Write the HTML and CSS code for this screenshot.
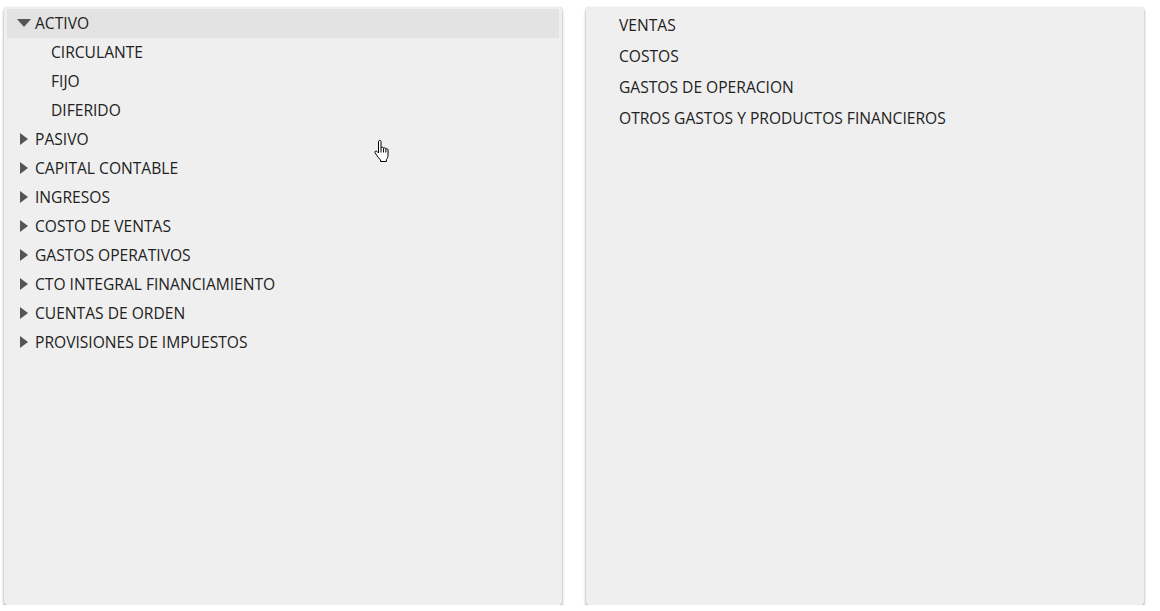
FILE: index.html
```html
<!DOCTYPE html>
<html lang="es">

<head>
    <meta charset="UTF-8">
    <title>Catalogo de cuentas</title>
    <link rel="stylesheet" href="styles.css">
</head>

<body>

    <div class="layout">
        <!-- Arbol de cuentas -->
        <div class="panel tree-panel">
            <ul class="tree">
                <li class="node open">
                    <div class="row selected"><span class="caret down"></span>ACTIVO</div>
                    <ul class="children">
                        <li><div class="row child">CIRCULANTE</div></li>
                        <li><div class="row child">FIJO</div></li>
                        <li><div class="row child">DIFERIDO</div></li>
                    </ul>
                </li>
                <li class="node"><div class="row"><span class="caret"></span>PASIVO</div></li>
                <li class="node"><div class="row"><span class="caret"></span>CAPITAL CONTABLE</div></li>
                <li class="node"><div class="row"><span class="caret"></span>INGRESOS</div></li>
                <li class="node"><div class="row"><span class="caret"></span>COSTO DE VENTAS</div></li>
                <li class="node"><div class="row"><span class="caret"></span>GASTOS OPERATIVOS</div></li>
                <li class="node"><div class="row"><span class="caret"></span>CTO INTEGRAL FINANCIAMIENTO</div></li>
                <li class="node"><div class="row"><span class="caret"></span>CUENTAS DE ORDEN</div></li>
                <li class="node"><div class="row"><span class="caret"></span>PROVISIONES DE IMPUESTOS</div></li>
            </ul>
        </div>

        <!-- Subcuentas -->
        <div class="panel list-panel">
            <ul class="list">
                <li>VENTAS</li>
                <li>COSTOS</li>
                <li>GASTOS DE OPERACION</li>
                <li>OTROS GASTOS Y PRODUCTOS FINANCIEROS</li>
            </ul>
        </div>
    </div>

    <!-- puntero del mouse -->
    <svg class="pointer" width="18" height="24" viewBox="0 0 18 24">
        <path d="M5.5 2.5c0-1.4 2.5-1.4 2.5 0V9c.2-1.1 2.4-1.1 2.5.1V9.6c.2-1 2.3-1 2.4.3v.4c.3-.9 2.1-.8 2.1.6V16c0 2-.7 3.5-1.6 4.5V22.5H7.5V21c-1.3-1.2-2.6-3-3.8-4.8l-1.6-2.4c-.8-1.3.8-2.4 1.8-1.4l1.6 1.6z"
            fill="#fff" stroke="#000" stroke-width="1" stroke-linejoin="round" />
        <path d="M8 9v4.5M10.5 9.8v3.7M12.9 10.5v3" stroke="#000" stroke-width="1" />
    </svg>

</body>

</html>
```

FILE: styles.css
```css
body {
    font-family: 'Open Sans', sans-serif;
    margin: 0;
    padding: 7px 0 0 4px;
    background: #fff;
    color: #222;
}

.layout {
    display: grid;
    grid-template-columns: 558px 558px;
    column-gap: 24px;
}

.panel {
    height: 598px;
    background-color: #efefef;
    border-radius: 3px;
    box-shadow: 0 2px 3px rgba(0, 0, 0, 0.4), 0 0 1px rgba(0, 0, 0, 0.2);
    box-sizing: border-box;
}

ul {
    list-style: none;
    margin: 0;
    padding: 0;
}

.tree-panel {
    padding: 2px 3px;
}

.row {
    height: 29px;
    line-height: 28px;
    padding-bottom: 1px;
    box-sizing: border-box;
    font-size: 15.6px;
    display: flex;
    align-items: center;
    padding-left: 10px;
}

.row.selected {
    background-color: #e3e3e3;
}

.row.child {
    padding-left: 44px;
}

.caret {
    width: 0;
    height: 0;
    border-top: 6px solid transparent;
    border-bottom: 6px solid transparent;
    border-left: 8px solid #555;
    margin-left: 3px;
    margin-right: 7px;
}

.caret.down {
    border-left: 7px solid transparent;
    border-right: 7px solid transparent;
    border-top: 8px solid #555;
    border-bottom: 0;
    margin-left: 0;
    margin-right: 4px;
}

.list-panel {
    padding: 3px 0 0 33px;
}

.list li {
    height: 31px;
    line-height: 31px;
    font-size: 15.6px;
}

.pointer {
    position: absolute;
    left: 373px;
    top: 139px;
}
```
